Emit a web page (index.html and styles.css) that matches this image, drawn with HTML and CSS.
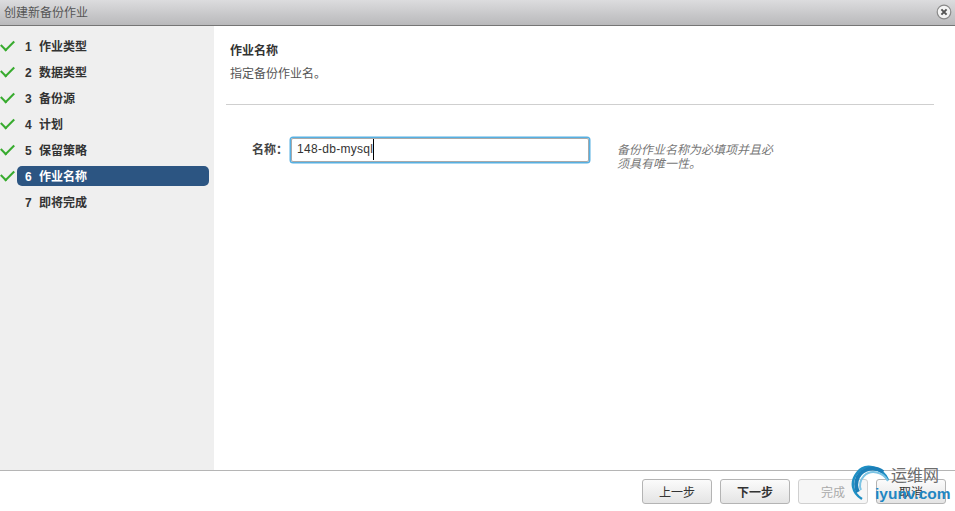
FILE: index.html
```html
<!DOCTYPE html>
<html lang="zh-CN">
<head>
    <meta charset="UTF-8">
    <title>创建新备份作业</title>
    <link rel="stylesheet" href="styles.css">
</head>
<body>
    <div class="dialog">
        <div class="title-bar">
            <span class="title-text">创建新备份作业</span>
            <svg class="close-icon" width="16" height="16" viewBox="0 0 16 16">
                <circle cx="8" cy="8" r="6.8" fill="#f4f4f4" stroke="#8a8a8a" stroke-width="1.2"/>
                <path d="M5.4 5.4 L10.6 10.6 M10.6 5.4 L5.4 10.6" stroke="#555" stroke-width="2"/>
            </svg>
        </div>

        <div class="main">
            <ul class="steps">
                <li class="step done"><span class="step-label"><b>1</b>作业类型</span></li>
                <li class="step done"><span class="step-label"><b>2</b>数据类型</span></li>
                <li class="step done"><span class="step-label"><b>3</b>备份源</span></li>
                <li class="step done"><span class="step-label"><b>4</b>计划</span></li>
                <li class="step done"><span class="step-label"><b>5</b>保留策略</span></li>
                <li class="step done current"><span class="step-label"><b>6</b>作业名称</span></li>
                <li class="step"><span class="step-label"><b>7</b>即将完成</span></li>
            </ul>

            <div class="content">
                <div class="content-head">
                    <h2 class="content-title">作业名称</h2>
                    <p class="content-desc">指定备份作业名。</p>
                </div>
                <div class="form-row">
                    <label class="form-label">名称：</label>
                    <div class="name-input">148-db-mysql<span class="caret"></span></div>
                    <p class="form-hint">备份作业名称为必填项并且必须具有唯一性。</p>
                </div>
            </div>
        </div>

        <div class="footer">
            <button class="btn">上一步</button>
            <button class="btn btn-next">下一步</button>
            <button class="btn btn-disabled">完成</button>
            <button class="btn">取消</button>
        </div>
    </div>

    <div class="watermark">
        <svg class="watermark-arc" width="52" height="47" viewBox="0 0 52 47">
            <path d="M38 16 C32 3 15 -2 7 9 C0 18 2 29 12 35" fill="none" stroke="#1f8fc4" stroke-width="2.5"/>
            <path d="M33 8 C25 2 13 4 8 13 C5 19 6 24 8 28" fill="none" stroke="#1b7fb8" stroke-width="4"/>
            <path d="M38 17 C33 8 21 5 14 12 C10 16 9 22 11 26" fill="none" stroke="#7cc4e4" stroke-width="2"/>
        </svg>
        <span class="watermark-cn">运维网</span>
        <span class="watermark-en">iyunv.com</span>
    </div>
</body>
</html>
```

FILE: styles.css
```css
* {
    box-sizing: border-box;
}

html, body {
    height: 100%;
}

body {
    margin: 0;
    background: #fff;
    color: #333;
    font-family: "Liberation Sans", "Noto Sans CJK SC", sans-serif;
    font-size: 12px;
    overflow: hidden;
    position: relative;
}

.dialog {
    height: 511px;
    display: flex;
    flex-direction: column;
}

.title-bar {
    height: 26px;
    flex: none;
    display: flex;
    align-items: center;
    justify-content: space-between;
    padding: 0 3px 2px 4px;
    background: linear-gradient(#dcdcde, #b9b9bb);
    border-bottom: 1px solid #757575;
}

.title-text {
    color: #555;
    font-size: 12px;
}

.main {
    flex: 1;
    display: flex;
    min-height: 0;
}

.steps {
    width: 214px;
    flex: none;
    margin: 0;
    padding: 7px 5px 0 17px;
    list-style: none;
    background: #efefef;
}

.step {
    height: 26px;
    display: flex;
    align-items: center;
    position: relative;
}

.step-label {
    flex: 1;
    height: 20px;
    line-height: 23px;
    padding-left: 8px;
    border-radius: 5px;
    color: #333;
    font-weight: bold;
    font-size: 12px;
    white-space: nowrap;
}

.step-label b {
    display: inline-block;
    width: 14px;
}

.step.done::before {
    content: "";
    position: absolute;
    left: -16px;
    top: 7px;
    width: 11px;
    height: 6px;
    border-left: 2.5px solid #37ab2e;
    border-bottom: 2.5px solid #37ab2e;
    transform: rotate(-45deg);
}

.step.current .step-label {
    background: #2c5582;
    color: #fff;
}

.content {
    flex: 1;
    padding: 0 21px 0 12px;
}

.content-head {
    height: 79px;
    padding: 18px 4px 0;
    border-bottom: 1px solid #cfcfcf;
}

.content-title {
    margin: 0 0 8px;
    font-size: 12px;
    line-height: 14px;
    font-weight: bold;
    color: #333;
}

.content-desc {
    margin: 0;
    font-size: 12px;
    line-height: 16px;
    color: #555;
}

.form-row {
    display: flex;
    align-items: flex-start;
    margin-top: 33px;
}

.form-label {
    width: 62px;
    flex: none;
    line-height: 24px;
    text-align: right;
    font-weight: bold;
    font-size: 12px;
    color: #444;
}

.name-input {
    width: 298px;
    height: 24px;
    flex: none;
    margin-left: 3px;
    line-height: 21px;
    padding-left: 5px;
    border: 1px solid #a9a9a9;
    border-radius: 2px;
    box-shadow: 0 0 0 1.5px #56b0e2;
    font-size: 12px;
    letter-spacing: 0.3px;
    color: #333;
}

.caret {
    display: inline-block;
    width: 1px;
    height: 21px;
    background: #000;
    vertical-align: top;
}

.form-hint {
    width: 160px;
    margin: 5px 0 0 28px;
    font-size: 12px;
    line-height: 14px;
    font-style: italic;
    color: #777;
}

.footer {
    height: 41px;
    flex: none;
    display: flex;
    justify-content: flex-end;
    gap: 8px;
    padding: 8px 9px 0 0;
    border-top: 1px solid #b5b5b5;
}

.btn {
    width: 70px;
    height: 25px;
    padding: 0;
    border: 1px solid #b4b4b4;
    border-radius: 3px;
    background: linear-gradient(#fbfbfb, #e4e4e4);
    color: #333;
    font-family: inherit;
    font-size: 12px;
}

.btn-next {
    font-weight: bold;
}

.btn-disabled {
    background: #f6f6f6;
    border-color: #d0d0d0;
    color: #aaa;
}

.watermark {
    position: absolute;
    left: 850px;
    top: 464px;
    width: 105px;
    height: 47px;
}

.watermark-arc {
    position: absolute;
    left: 0;
    top: 0;
}

.watermark-cn {
    position: absolute;
    left: 41px;
    top: 3px;
    font-size: 16px;
    line-height: 18px;
    color: #6d6d6d;
}

.watermark-en {
    position: absolute;
    left: 25px;
    top: 20px;
    font-size: 15.5px;
    line-height: 20px;
    font-weight: bold;
    color: #1f86c2;
    white-space: nowrap;
}
```
